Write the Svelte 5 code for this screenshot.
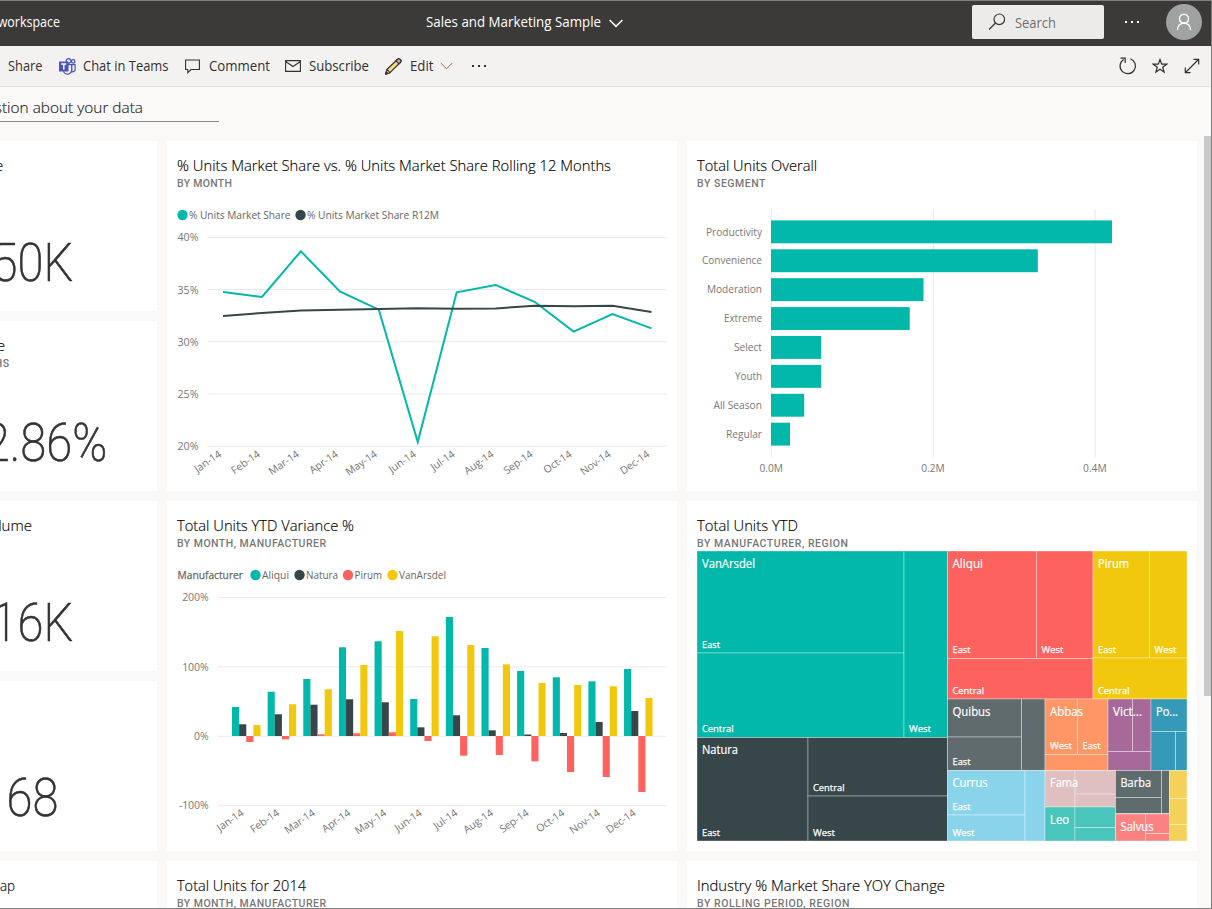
<script lang="ts">
  const teal = '#01b8aa';
  const dark = '#374649';
  const red = '#fd625e';
  const yellow = '#f2c80f';
  const slate = '#5f6b6d';

  const months = ['Jan', 'Feb', 'Mar', 'Apr', 'May', 'Jun', 'Jul', 'Aug', 'Sep', 'Oct', 'Nov', 'Dec'];

  type Kpi = { title?: string; titleWidth?: number; sub?: string; subWidth?: number; value?: string };
  const kpis: Kpi[] = [
    { title: 'Market Share', titleWidth: 86, value: '50K' },
    { title: 'Market Share', titleWidth: 88, sub: 'LAST 12 MONTHS', subWidth: 92, value: '32.86%' },
    { title: 'Category Volume', titleWidth: 115, value: '16K' },
    { value: '68' },
    { title: 'Units Share Gap', titleWidth: 98 }
  ];

  // market share line chart
  const share = [34.77, 34.29, 38.66, 34.83, 33.08, 20.4, 34.74, 35.44, 33.83, 30.98, 32.66, 31.29];
  const rolling = [32.47, 32.76, 32.99, 33.06, 33.13, 33.21, 33.16, 33.19, 33.45, 33.4, 33.46, 32.85];
  const lineX = (i: number) => 56 + i * 38.95;
  const lineY = (v: number) => 46.3 + (40 - v) * 10.45;
  const toPoints = (s: number[]) => s.map((v, i) => `${lineX(i)},${lineY(v)}`).join(' ');

  // units by segment
  const segments = [
    { name: 'Productivity', units: 0.4215, w: 56 },
    { name: 'Convenience', units: 0.3298, w: 60 },
    { name: 'Moderation', units: 0.1885, w: 55 },
    { name: 'Extreme', units: 0.1715, w: 38 },
    { name: 'Select', units: 0.062, w: 28 },
    { name: 'Youth', units: 0.062, w: 27 },
    { name: 'All Season', units: 0.041, w: 48.5 },
    { name: 'Regular', units: 0.0235, w: 36 }
  ];
  const segX = (m: number) => 84 + m * 809;

  // YTD variance columns
  const makers = [
    { name: 'Aliqui', color: teal, cx: 88.5, w: 27, values: [41.8, 63.8, 82.1, 127.8, 136.5, 53.3, 171.5, 126.8, 93.7, 84.6, 78.8, 96.5] },
    { name: 'Natura', color: dark, cx: 132.5, w: 32, values: [16.9, 31.3, 45.1, 52.9, 48.6, 12.5, 29.8, 8.2, 2.2, 4.3, 20.2, 36] },
    { name: 'Pirum', color: red, cx: 181, w: 27.5, values: [-8.6, -4.8, 2.4, 3.9, 5.3, -7.2, -28.4, -27.4, -36.5, -51.9, -59.1, -80.7] },
    { name: 'VanArsdel', color: yellow, cx: 225.5, w: 47, values: [15.9, 45.7, 67.3, 102.3, 151.3, 143.7, 131.1, 103.3, 76.4, 73.5, 71.6, 54.8] }
  ];
  const pct = (v: number) => 185 - v * 0.694;

  // treemap: cells are [x0, y0, x1, y1, label, label width]
  type Cell = [number, number, number, number, string?, number?];
  const tree: { name: string; w: number; color: string; cells: Cell[] }[] = [
    { name: 'VanArsdel', w: 53, color: teal, cells: [[10, 0, 217, 102, 'East', 18], [10, 102, 217, 186.5, 'Central', 31.5], [217, 0, 260.5, 186.5, 'West', 22]] },
    { name: 'Natura', w: 36, color: dark, cells: [[10, 186.5, 121, 290, 'East', 18], [121, 186.5, 260.5, 245, 'Central', 31.5], [121, 245, 260.5, 290, 'West', 22]] },
    { name: 'Aliqui', w: 30.5, color: red, cells: [[260.5, 0, 349.5, 107.5, 'East', 18], [349.5, 0, 406, 107.5, 'West', 22], [260.5, 107.5, 406, 148, 'Central', 31.5]] },
    { name: 'Pirum', w: 31, color: yellow, cells: [[406, 0, 462.5, 107, 'East', 18], [462.5, 0, 500, 107, 'West', 22], [406, 107, 500, 148, 'Central', 31.5]] },
    { name: 'Quibus', w: 38, color: slate, cells: [[260.5, 148, 334.5, 186], [260.5, 186, 334.5, 219.5, 'East', 18], [334.5, 148, 358, 219.5]] },
    { name: 'Abbas', w: 33, color: '#fe9666', cells: [[358, 148, 390.5, 203.5, 'West', 22], [390.5, 148, 421, 203.5, 'East', 18], [358, 203.5, 421, 219.5]] },
    { name: 'Vict...', w: 29, color: '#a66999', cells: [[421, 148, 445.5, 200.5], [445.5, 148, 464, 200.5], [421, 200.5, 464, 219.5]] },
    { name: 'Po...', w: 22, color: '#3599b8', cells: [[464, 148, 500, 180.5], [464, 180.5, 488.5, 219.5], [488.5, 180.5, 500, 219.5]] },
    { name: 'Currus', w: 35, color: '#8ad4eb', cells: [[260.5, 219.5, 338, 264, 'East', 18], [260.5, 264, 338, 290, 'West', 22], [338, 219.5, 358, 290]] },
    { name: 'Fama', w: 28, color: '#dfbfbf', cells: [[358, 219.5, 388, 256], [388, 219.5, 428.5, 243], [388, 243, 428.5, 256]] },
    { name: 'Leo', w: 19, color: '#4ac5bb', cells: [[358, 256, 388, 290], [388, 256, 428.5, 276.5], [388, 276.5, 428.5, 290]] },
    { name: 'Barba', w: 30.5, color: slate, cells: [[428.5, 219.5, 474.5, 246.5], [428.5, 246.5, 474.5, 262.5], [474.5, 219.5, 482.5, 262.5]] },
    { name: 'Salvus', w: 33, color: '#fb8281', cells: [[428.5, 263, 458.5, 290], [458.5, 263, 482.5, 282.5], [458.5, 282.5, 482.5, 290]] },
    { name: '', w: 0, color: '#f4d25a', cells: [[482.5, 219.5, 500, 247.5], [482.5, 247.5, 500, 273.5], [482.5, 273.5, 500, 290]] }
  ];
</script>

{#snippet fit(text: string, width: number, cls: string)}
  <svg class="fit {cls}" {width} height="20"><text y="15" textLength={width} lengthAdjust={cls === 'sub' ? 'spacing' : 'spacingAndGlyphs'}>{text}</text></svg>
{/snippet}

{#snippet heading(title: string, width: number, sub: string, subWidth: number)}
  <div class="tile-head">
    {@render fit(title, width, 'title')}
    {@render fit(sub, subWidth, 'sub')}
  </div>
{/snippet}

{#snippet label(text: string, x: number, y: number, width: number, cls = '')}
  <text class={cls} {x} {y} textLength={width} lengthAdjust="spacingAndGlyphs">{text}</text>
{/snippet}

<div class="app">
  <header>
    <div class="crumb">{@render fit('My workspace', 83, 'nav')}</div>
    <div class="switcher">
      {@render fit('Sales and Marketing Sample', 175, 'nav')}
      <svg width="14" height="9" viewBox="0 0 14 9" fill="none" stroke="#fff" stroke-width="1.5"><path d="M.6 1l6.400 6.400L13.400 1" /></svg>
    </div>
    <div class="search">
      <svg width="18" height="18" viewBox="0 0 18 18" fill="none" stroke="#3b3a39" stroke-width="1.2"><circle cx="11.300" cy="6.300" r="5.300" /><path d="M7.500 10L1 16.500" /></svg>
      {@render fit('Search', 41, 'hint')}
    </div>
    <svg class="more" width="16" height="4" viewBox="0 0 16 4" fill="#fff"><path d="M1 1h2v2H1zM7 1h2v2H7zM13 1h2v2h-2z" /></svg>
    <div class="avatar">
      <svg width="18" height="18" viewBox="0 0 18 18" fill="none" stroke="#fff" stroke-width="1.5"><circle cx="9" cy="5.800" r="4.500" /><path d="M2.500 17c0-4 2.800-6.700 6.500-6.700s6.500 2.700 6.500 6.700" /></svg>
    </div>
  </header>

  <div class="toolbar">
    <div class="cmd">{@render fit('Share', 34.5, 'item')}</div>
    <div class="cmd teams">
      <svg width="17" height="17" viewBox="0 0 17 17">
        <g fill="#f3f2f1" stroke="#4b53bc" stroke-width="1.2">
          <circle cx="14.200" cy="3.400" r="1.700" />
          <path d="M12.500 6.600h3.600v4.800c0 1.600-1.200 2.700-3.400 2.500z" />
          <circle cx="9.500" cy="2.900" r="2.300" />
          <path d="M5.500 6.600h7.200v5.200a4.300 4.300 0 0 1-8 2.200z" />
        </g>
        <rect y="3.500" width="9.500" height="10" rx=".6" fill="#4b53bc" />
        <path d="M2.300 6h5M4.800 6v5.600" stroke="#fff" stroke-width="1.500" />
      </svg>
      {@render fit('Chat in Teams', 85.5, 'item')}
    </div>
    <div class="cmd comment">
      <svg width="15" height="15" viewBox="0 0 15 15" fill="none" stroke="#323130" stroke-width="1.100"><path d="M.6 1h13.800v9.500H6L2.800 13.700v-3.200H.6z" /></svg>
      {@render fit('Comment', 61, 'item')}
    </div>
    <div class="cmd mail">
      <svg width="16" height="12" viewBox="0 0 16 12" fill="none" stroke="#323130" stroke-width="1.100"><path d="M.6.6h14.800v10.800H.6zM.6 1.500L8 6.500l7.400-5" /></svg>
      {@render fit('Subscribe', 60, 'item')}
    </div>
    <div class="cmd edit">
      <svg width="17" height="17" viewBox="0 0 17 17" stroke="#323130" stroke-width="1.100" stroke-linejoin="round">
        <path d="M.8 16l1.100-4.500L12.300 1.500a2 2 0 0 1 3 3L5 14.700z" fill="#fbd77c" />
        <path d="M10.900 2.900l1.400-1.400a2 2 0 0 1 3 3l-1.400 1.300z" fill="#c99bbd" />
        <path d="M.8 16l1.100-4.500L5 14.700z" fill="#fff" />
        <path d="M.8 16l.5-2 1.500 1.500z" fill="#323130" />
      </svg>
      {@render fit('Edit', 23.5, 'item')}
      <svg class="caret" width="13" height="8" viewBox="0 0 13 8" fill="none" stroke="#a4664b" stroke-width="1"><path d="M.7 1l5.800 5.800L12.300 1" /></svg>
    </div>
    <svg class="dots" width="16" height="4" viewBox="0 0 16 4" fill="#323130"><path d="M1 1h2v2H1zM7 1h2v2H7zM13 1h2v2h-2z" /></svg>
    <div class="view-icons">
      <svg width="18" height="18" viewBox="0 0 18 18" fill="none" stroke="#323130" stroke-width="1.200"><path d="M11.300 1.700a7.700 7.700 0 1 1-6.600.7M1.500 1.200h4.700v4.700" /></svg>
      <svg width="16" height="16" viewBox="0 0 16 16" fill="none" stroke="#323130" stroke-width="1.200"><path d="M8 1.500l1.700 4.700h4.900l-3.900 3 1.400 4.900L8 11.200l-4.100 2.900 1.400-4.900-3.900-3h4.900z" /></svg>
      <svg width="16" height="16" viewBox="0 0 16 16" fill="none" stroke="#323130" stroke-width="1.200"><path d="M1.500 14.500l13-13M9.500 1.300h5.200v5.200M1.300 9.500v5.200h5.200" /></svg>
    </div>
  </div>

  <div class="ask"><div class="ask-input">{@render fit('Ask a question about your data', 215, 'question')}</div></div>

  <main>
    <div class="grid">
      {#each kpis as kpi}
        <section class="kpi">
          {#if kpi.title}
            <div class="tile-head">
              {@render fit(kpi.title, kpi.titleWidth ?? 0, 'title')}
              {#if kpi.sub}{@render fit(kpi.sub, kpi.subWidth ?? 0, 'sub')}{/if}
            </div>
          {/if}
          {#if kpi.value}
            <svg class="value" class:untitled={!kpi.title} width="250" height="60"><text transform="translate(125.500 50) scale(.89 1)">{kpi.value}</text></svg>
          {/if}
        </section>
      {/each}

      <section class="tile share">
        {@render heading('% Units Market Share vs. % Units Market Share Rolling 12 Months', 434, 'BY MONTH', 55)}
        <svg class="chart" width="510" height="300">
          <circle cx="15.500" cy="24" r="5.200" fill={teal} />
          {@render label('% Units Market Share', 22, 28, 101.5, 'legend')}
          <circle cx="133.500" cy="24" r="5.200" fill={dark} />
          {@render label('% Units Market Share R12M', 140, 28, 132, 'legend')}
          {#each [40, 35, 30, 25, 20] as v}
            <line class="rule" x1="41" x2="500" y1={lineY(v)} y2={lineY(v)} />
            {@render label(`${v}%`, 10.5, lineY(v) + 4, 21)}
          {/each}
          <polyline points={toPoints(share)} stroke={teal} />
          <polyline points={toPoints(rolling)} stroke={dark} />
          {#each months as m, i}
            <text class="tick" transform="translate({lineX(i) - 1} {lineY(20) + 9.5}) rotate(-35)">{m}-14</text>
          {/each}
        </svg>
      </section>

      <section class="tile segment">
        {@render heading('Total Units Overall', 120, 'BY SEGMENT', 68.5)}
        <svg class="chart" width="510" height="300">
          {#each [0, 0.2, 0.4] as v}
            <line class="rule" x1={segX(v) + 0.5} x2={segX(v) + 0.5} y1="18" y2="267" />
            {@render label(`${v.toFixed(1)}M`, segX(v) - 11.5, 281, 23.5)}
          {/each}
          {#each segments as s, i}
            <rect x="84" y={29.4 + i * 28.9} width={s.units * 809} height="22.900" fill={teal} />
            {@render label(s.name, 75 - s.w, Math.floor(45 + i * 28.9), s.w)}
          {/each}
        </svg>
      </section>

      <section class="tile variance">
        {@render heading('Total Units YTD Variance %', 177, 'BY MONTH, MANUFACTURER', 149)}
        <svg class="chart" width="510" height="300">
          {@render label('Manufacturer', 10.5, 28, 65.5, 'legend strong')}
          {#each [200, 100, 0, -100] as v}
            <line class="rule" x1="51" x2="500" y1={pct(v) + 0.3} y2={pct(v) + 0.3} />
            <text class="pct" x="41.500" y={pct(v) + 4}>{v}%</text>
          {/each}
          {#each makers as m, k}
            <circle cx={m.cx} cy="24" r="5.200" fill={m.color} />
            {@render label(m.name, m.cx + 6.5, 28, m.w, 'legend')}
            {#each m.values as v, i}
              <rect x={65 + i * 35.64 + k * 7.13} y={Math.min(pct(v), 185)} width="7.130" height={Math.abs(v) * 0.694} fill={m.color} />
            {/each}
          {/each}
          {#each months as m, i}
            <text class="tick" transform="translate({77.5 + i * 35.64} 263.500) rotate(-35)">{m}-14</text>
          {/each}
        </svg>
      </section>

      <section class="tile treemap">
        {@render heading('Total Units YTD', 101, 'BY MANUFACTURER, REGION', 151)}
        <svg class="chart" width="510" height="300">
          {#each tree as g}
            {#each g.cells as [x0, y0, x1, y1]}
              <rect class="cell" x={x0} y={y0} width={x1 - x0} height={y1 - y0} fill={g.color} />
            {/each}
          {/each}
          {#each tree as g}
            {#if g.name}{@render label(g.name, g.cells[0][0] + 5, Math.floor(g.cells[0][1]) + 17, g.w, 'group')}{/if}
            {#each g.cells as [x0, , , y1, name, w]}
              {#if name}{@render label(name, x0 + 5, Math.floor(y1) - 5, w ?? 0, 'region')}{/if}
            {/each}
          {/each}
        </svg>
      </section>

      <section class="tile next">{@render heading('Total Units for 2014', 129, 'BY MONTH, MANUFACTURER', 149)}</section>
      <section class="tile next">{@render heading('Industry % Market Share YOY Change', 248, 'BY ROLLING PERIOD, REGION', 152.5)}</section>
    </div>
    <div class="scrollbar"><div class="thumb"></div></div>
  </main>
</div>

<style>
  :global(body) { margin: 0; overflow: hidden; }
  .app {
    width: 1212px; height: 909px; box-sizing: border-box; overflow: hidden;
    display: flex; flex-direction: column;
    border: 1px solid #7f7f7f; border-left: none;
    background: #faf9f8; font-family: 'Segoe UI', 'Open Sans', 'Noto Sans', sans-serif;
  }
  svg { flex: none; display: block; }
  .fit { overflow: visible; fill: #323130; font-size: 14px; }
  .fit.nav { fill: #fff; }
  .fit.hint { fill: #706e6c; }
  .fit.title { font-size: 15px; font-weight: 300; fill: #000; stroke: #000; stroke-width: 0.15px; }
  .fit.question { font-size: 15px; font-weight: 300; fill: #222; stroke: #222; stroke-width: 0.15px; }
  .fit.sub { height: 13px; font-family: Roboto, sans-serif; font-size: 10.5px; font-weight: 500; fill: #777; }

  header { height: 45px; flex: none; display: flex; align-items: center; background: #3b3a39; padding-right: 9px; }
  .crumb { width: 425.5px; margin-top: -3px; }
  .crumb .fit { margin-left: -23px; }
  .switcher { display: flex; align-items: center; gap: 8px; flex: 1; margin-top: -3px; }
  .switcher svg:last-child { margin-top: 2px; }
  .search { width: 132px; height: 34px; box-sizing: border-box; display: flex; align-items: center; gap: 9px; padding-left: 16px; background: #edebe9; border-radius: 2px; margin-top: -3px; }
  .search .fit { margin-top: 2px; }
  .more { margin: -3px 26px 0 20px; }
  .avatar { width: 36px; height: 36px; border-radius: 50%; background: #a0a2a2; display: flex; align-items: center; justify-content: center; margin-top: -3px; }

  .toolbar { height: 40px; flex: none; display: flex; align-items: center; background: #f3f2f1; border-bottom: 1px solid #e1dfdd; padding: 0 11px 0 8px; }
  .cmd { display: flex; align-items: center; }
  .teams { gap: 7px; margin-left: 16.5px; }
  .comment { gap: 9px; margin-left: 16px; }
  .mail { gap: 8px; margin-left: 15.5px; }
  .edit { gap: 8px; margin-left: 15.5px; }
  .edit .caret { margin-left: -1px; }
  .dots { margin-left: 17.5px; }
  .view-icons { display: flex; align-items: center; gap: 16px; margin-left: auto; }
  .view-icons svg:first-child { margin-right: -1px; }

  .ask { height: 49px; flex: none; }
  .ask-input { width: 219px; height: 34px; display: flex; align-items: center; border-bottom: 1px solid #8a8886; box-sizing: content-box; }
  .ask-input .fit { margin: 7px 0 0 -72px; }

  main { flex: 1; min-height: 0; display: flex; overflow: hidden; }
  .grid {
    flex: none; margin: 5px 7px 0 -93px;
    display: grid; grid-template-columns: 250px 510px 510px; grid-template-rows: repeat(5, 170px); grid-auto-flow: column; gap: 10px;
  }
  section { background: #fff; overflow: hidden; }
  .kpi { grid-column: 1; display: flex; flex-direction: column; }
  .tile { grid-row: 1 / span 2; }
  .share, .variance, .next { grid-column: 2; }
  .segment, .treemap { grid-column: 3; }
  .variance, .treemap { grid-row: 3 / span 2; }
  .next { grid-row: 5; }
  .next:last-child { grid-column: 3; }
  .tile-head { height: 35px; flex: none; padding: 15px 10px 0; }
  .tile-head .sub { margin-top: -4px; }

  .value { margin-top: 40px; }
  .value.untitled { margin-top: 85px; }
  .value text { font-family: Roboto, sans-serif; font-weight: 200; font-size: 53px; text-anchor: middle; fill: #333; stroke: #333; stroke-width: 0.6px; }

  .chart text { font-size: 10.5px; fill: #777; }
  .chart .legend { font-size: 11px; fill: #666; }
  .chart .strong { stroke: #666; stroke-width: 0.25px; }
  .chart .tick, .chart .pct { text-anchor: end; letter-spacing: -0.1px; }
  .rule { stroke: #eaeaea; }
  polyline { fill: none; stroke-width: 2; stroke-linejoin: miter; }
  .cell { stroke: #fff; stroke-opacity: 0.35; stroke-width: 1; }
  .chart .group { font-size: 12px; fill: #fff; stroke: #fff; stroke-width: 0.2px; }
  .chart .region { font-size: 9.5px; fill: #fff; stroke: #fff; stroke-width: 0.25px; }

  .scrollbar { width: 7px; flex: none; }
  .thumb { height: 560px; background: #c8c8c8; }
</style>
